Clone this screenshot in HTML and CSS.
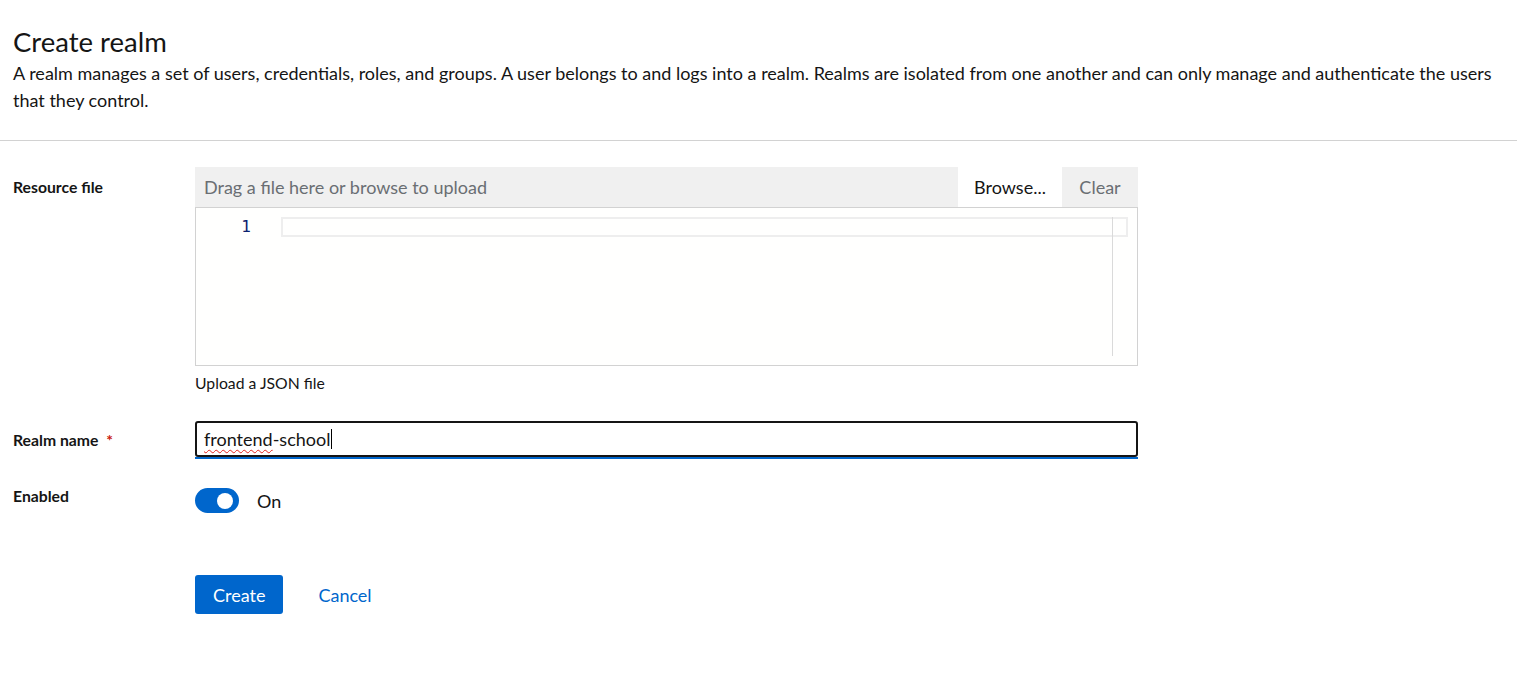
FILE: index.html
```html
<!DOCTYPE html>
<html lang="en">
<head>
<meta charset="utf-8">
<title>Create realm</title>
<link rel="stylesheet" href="styles.css">
</head>
<body>
<header class="page-header">
  <h1 class="title">Create realm</h1>
  <p class="lead">A realm manages a set of users, credentials, roles, and groups. A user belongs to and logs into a realm. Realms are isolated from one another and can only manage and authenticate the users that they control.</p>
</header>
<main class="page-section">
  <form class="form">
    <div class="form-group">
      <div class="label label-file">Resource file</div>
      <div class="control">
        <div class="upload-bar">
          <div class="upload-text">Drag a file here or browse to upload</div>
          <button type="button" class="btn-browse">Browse...</button>
          <button type="button" class="btn-clear">Clear</button>
        </div>
        <div class="editor">
          <div class="editor-inner">
            <div class="gutter"><span class="line-no">1</span></div>
            <div class="code"><div class="current-line"></div></div>
            <div class="ruler"></div>
          </div>
        </div>
        <div class="helper">Upload a JSON file</div>
      </div>
    </div>
    <div class="form-group">
      <div class="label label-input">Realm name <span class="required">*</span></div>
      <div class="control">
        <div class="input-wrap">
          <div class="input"><span class="misspelled">frontend</span>-school<span class="caret"></span></div>
        </div>
      </div>
    </div>
    <div class="form-group">
      <div class="label label-switch">Enabled</div>
      <div class="control switch-row">
        <span class="toggle"><span class="knob"></span></span>
        <span class="toggle-label">On</span>
      </div>
    </div>
    <div class="form-actions">
      <button type="button" class="btn-primary">Create</button>
      <button type="button" class="btn-link">Cancel</button>
    </div>
  </form>
</main>
</body>
</html>
```
FILE: styles.css
```css
* { box-sizing: border-box; }
html, body { margin: 0; padding: 0; background: #fff; }
body {
  font-family: "Lato", "Liberation Sans", sans-serif;
  color: #151515;
  font-size: 18px;
}
.page-header {
  padding: 25px 8px 26px 13px;
  border-bottom: 1px solid #d2d2d2;
}
.title {
  margin: 0;
  font-size: 27.5px;
  font-weight: 400;
  line-height: 33px;
}
.lead {
  margin: 2px 0 0;
  font-size: 18px;
  line-height: 27px;
}
.page-section {
  padding: 26px 13px;
}
.form {
  display: grid;
  grid-template-columns: 182px 943px;
  row-gap: 27px;
}
.form-group { display: contents; }
.label {
  font-size: 15.75px;
  font-weight: 700;
  line-height: 21px;
}
.label-file { padding-top: 9px; }
.label-input { padding-top: 8px; }
.label-switch { margin-top: -1px; }
.required { color: #c9190b; margin-left: 4px; }
.control { min-width: 0; }

.upload-bar {
  display: flex;
  height: 40px;
  background: #f0f0f0;
}
.upload-text {
  flex: 1;
  padding: 0 9px;
  line-height: 40px;
  color: #6a6e73;
}
.upload-bar button {
  font: inherit;
  border: 0;
  padding: 0;
  height: 40px;
  cursor: pointer;
}
.btn-browse { background: #fff; color: #151515; width: 104px; }
.btn-clear { background: #f0f0f0; color: #6a6e73; width: 76px; }

.editor {
  border: 1px solid #d2d2d2;
  height: 159px;
  background: #fffffe;
  padding: 9px 0;
}
.editor-inner {
  position: relative;
  display: flex;
  height: 139px;
}
.gutter {
  width: 85px;
  padding-right: 30px;
  text-align: right;
  font-family: "DejaVu Sans Mono", "Liberation Mono", monospace;
  font-size: 16px;
  line-height: 20px;
  color: #0b216f;
}
.code { flex: 1; padding-right: 9px; }
.current-line {
  height: 20px;
  border: 2px solid #eeeeee;
}
.ruler {
  position: absolute;
  top: 0;
  bottom: 0;
  right: 24px;
  width: 1px;
  background: #dadada;
}
.helper {
  margin-top: 5px;
  font-size: 15.75px;
  line-height: 23px;
}

.input-wrap {
  border-bottom: 2px solid #06c;
}
.input {
  height: 36px;
  border: 2px solid #151515;
  border-radius: 3px;
  padding: 0 7px;
  line-height: 32px;
  font-size: 18px;
  display: flex;
  align-items: center;
  white-space: pre;
}
.misspelled {
  text-decoration: underline wavy #e0201b;
  text-decoration-thickness: 1px;
  text-underline-offset: 3px;
}
.caret {
  display: inline-block;
  width: 1px;
  height: 20px;
  background: #000;
  margin-left: 1px;
}

.switch-row {
  display: flex;
  align-items: center;
  padding-top: 2px;
}
.toggle {
  width: 44px;
  height: 25px;
  border-radius: 13px;
  background: #06c;
  display: inline-flex;
  align-items: center;
  justify-content: flex-end;
  padding-right: 6px;
}
.knob {
  width: 16px;
  height: 16px;
  border-radius: 50%;
  background: #fff;
}
.toggle-label {
  margin-left: 18px;
  font-size: 18px;
}

.form-actions {
  grid-column: 2;
  margin-top: 35px;
  display: flex;
  align-items: center;
}
.btn-primary {
  font: inherit;
  font-size: 18px;
  height: 39px;
  padding: 0 18px;
  border: 0;
  border-radius: 3px;
  background: #06c;
  color: #fff;
}
.btn-link {
  font: inherit;
  font-size: 18px;
  height: 39px;
  padding: 0 18px;
  margin-left: 17px;
  border: 0;
  background: none;
  color: #06c;
}
```
